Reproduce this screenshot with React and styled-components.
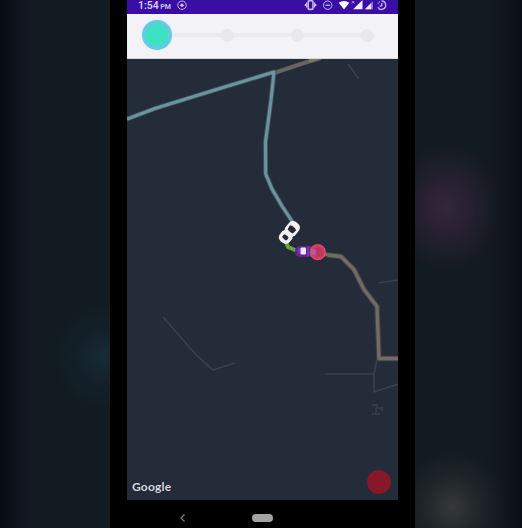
import React from "react";
import styled, { createGlobalStyle } from "styled-components";

const GlobalStyle = createGlobalStyle`
  * { box-sizing: border-box; }
  body { margin: 0; background: #000; overflow: hidden; }
`;

const Stage = styled.main`
  width: 522px;
  height: 528px;
  padding-left: 110px;
  overflow: hidden;
  font-family: Roboto, "Liberation Sans", sans-serif;
  background:
    radial-gradient(ellipse 54px 62px at 446px 207px, #36263b 0%, #32243880 55%, transparent 100%),
    radial-gradient(ellipse 54px 56px at 452px 507px, #353938 0%, #2b303080 52%, transparent 100%),
    radial-gradient(ellipse 50px 52px at 104px 357px, #182b35 0%, #15263080 50%, transparent 100%),
    linear-gradient(90deg, #080b13 0, #0d121a 12px, #121922 30px, #121b22 60px, #131b22 480px, #10161d 505px, #090e16 522px);
`;

const Phone = styled.section`
  display: flex;
  flex-direction: column;
  width: 305px;
  height: 528px;
  padding: 0 17px;
  background: #000;
`;

const StatusBar = styled.header`
  display: flex;
  justify-content: space-between;
  flex: 0 0 14px;
  height: 14px;
  padding-left: 11px;
  background: #390ea4;
  color: #d9cbf4;
`;

const Clock = styled.div`
  display: flex;
  align-items: baseline;
  height: 12px;
  line-height: 11px;
  font-size: 10.5px;
  font-weight: 600;
`;

const Meridiem = styled.span`
  margin-left: 1.5px;
  font-size: 7px;
`;

const AlarmBadge = styled.svg`
  align-self: flex-start;
  width: 10px;
  height: 11px;
  margin-left: 6px;
`;

const StatusIcons = styled.svg`
  width: 96px;
  height: 14px;
`;

const Stepper = styled.nav`
  display: flex;
  align-items: center;
  flex: 0 0 45px;
  height: 45px;
  padding: 0 24px 2px 15px;
  background: #f3f2f6;
  border-bottom: 1px solid #d9d9de;
`;

const Step = styled.span`
  flex: none;
  width: ${({ $active }) => ($active ? 30 : 13)}px;
  height: ${({ $active }) => ($active ? 30 : 13)}px;
  border-radius: 50%;
  background: ${({ $active }) => ($active ? "#3be3c2" : "#e9e8eb")};
  border: ${({ $active }) => ($active ? "4px solid #62cbe2" : "1px solid #e8e7ea")};
  box-shadow: ${({ $active }) => ($active ? "0 0 2px #bce8ee" : "none")};
`;

const Connector = styled.span`
  flex: 1 1 ${({ $first }) => ($first ? 49 : 57)}px;
  height: 4px;
  background: #ecebee;
`;

const MapView = styled.section`
  position: relative;
  flex: 0 0 441px;
  background: #242b39;
`;

const MapDrawing = styled.svg`
  display: block;
  width: 271px;
  height: 441px;
`;

const Attribution = styled.span`
  position: absolute;
  left: 5px;
  bottom: 4px;
  color: #d9dbe0;
  font: 700 12px/18px Lato, sans-serif;
  letter-spacing: .2px;
  text-shadow: 0 0 1px #10151f;
`;

const RecordButton = styled.button`
  position: absolute;
  right: 7px;
  bottom: 6px;
  width: 24px;
  height: 24px;
  padding: 0;
  border: 0;
  border-radius: 50%;
  background: #85192a;
`;

const NavigationBar = styled.footer`
  display: flex;
  align-items: center;
  flex: 0 0 28px;
  padding: 8px 0 0 52px;
`;

const BackIcon = styled.svg`
  width: 8px;
  height: 10px;
`;

const HomePill = styled.span`
  width: 21px;
  height: 8px;
  margin-left: 65px;
  border-radius: 4px;
  background: #a3a3a3;
`;

function SystemIcons() {
  return (
    <StatusIcons viewBox="302 0 96 14" fill="none" stroke="#c8b7ed" strokeWidth="1.3" aria-hidden="true">
      <rect x="308.2" y=".8" width="4.8" height="8.6" rx="1" strokeWidth="1.6" />
      <path d="M306.6 2.5v5M314.6 2.5v5M305.4 4v2M315.8 4v2" />
      <circle cx="327.7" cy="5.2" r="4.2" strokeWidth="1" />
      <path d="M325.5 5.2h4.4" strokeWidth="1.3" />
      <path d="M338.7 2.8Q344 -.9 349.3 2.8L344 9.5Z" fill="#fff" stroke="none" />
      <path d="M362.5 0v9.2h-9.3Z" fill="#f2ecff" stroke="none" />
      <path d="M351.8 1l2.5 2.5M354.3 1l-2.5 2.5" strokeWidth=".8" />
      <path d="M373 1v8.2h-8.2Z" fill="#8770c7" stroke="none" />
      <path d="M371.2 3v6.2H365Z" fill="#eee5ff" stroke="none" />
      <path d="M381.5 1a4.2 4.2 0 1 1-3.7 6.2" />
      <path d="M378 3.7a4.2 4.2 0 0 1 2-2" strokeDasharray="1 1" />
      <path d="M381.8 3.1v2.3l-2 1.2" />
    </StatusIcons>
  );
}

function RouteMap() {
  return (
    <MapDrawing viewBox="127 59 271 441" fill="none" strokeLinejoin="round" aria-label="Route map">
      <g stroke="#39404b" strokeWidth="1.7">
        <path d="M163 317l21 24q10 13 29 29l22-7" />
        <path d="M348 64l11 15M378 283l20-3M325 374h49v18l24-8M377 359l-3 15" />
        <path d="M372 405h5v3h5M382 406v5M372 414h8M376 408v6" strokeWidth="1.3" />
      </g>
      <path d="M274 73l30-10 17-5" stroke="#68645f" strokeWidth="4.2" />
      <path d="M309 61l12-4" stroke="#847d68" strokeWidth="2.6" />
      <path d="M318 252l10 3 13 1.5 13 13 10 20 13 17 2 52h19" stroke="#444445" strokeWidth="5.4" />
      <path d="M318 252l10 3 13 1.5 13 13 10 20 13 17 2 52h19" stroke="#706b64" strokeWidth="3.3" />
      <path d="M127 119l28-10.5 68-21 51-15.5-3 28-5.5 42 .2 32 6.3 15 10 17 10.5 16" stroke="#40555f" strokeWidth="4.9" />
      <path d="M127 119l28-10.5 68-21 51-15.5-3 28-5.5 42 .2 32 6.3 15 10 17 10.5 16" stroke="#6c949e" strokeWidth="3" />
      <path d="M286 242l2 5 8 3.5" stroke="#68a43b" strokeWidth="4" />
      <g transform="translate(289.3 232.5) rotate(39)">
        <rect x="-6.3" y="-12.4" width="12.6" height="24.6" rx="5" fill="#f1f1f1" />
        <path d="M-4-6Q0-8.2 4-6L3.3-1.4Q0-.4-3.3-1.4Z" fill="#242932" />
        <rect x="-2.9" y="4" width="5.8" height="4.4" rx="1.4" fill="#242932" />
        <path d="M-6.3-.4v2.6M6.3-.4v2.6" stroke="#242932" strokeWidth="1.6" />
      </g>
      <rect x="295" y="246" width="20" height="11" rx="5" fill="#642297" />
      <rect x="300.5" y="247.5" width="5.5" height="7" rx="1" fill="#f0e6ff" />
      <path d="M299 248.5v5M308 247v9" stroke="#8950c0" />
      <circle cx="317.8" cy="252.2" r="8" fill="#c73a62" />
      <circle cx="317.8" cy="252.2" r="7.3" stroke="#e64a63" strokeWidth="1.3" />
      <path d="M311 249h4.5v6H311" fill="#b15d9e" />
      <path d="M315 248.5l6 1 1 5-6 2M318 249v6" stroke="#9e3658" strokeWidth=".8" />
    </MapDrawing>
  );
}

export default function App() {
  return (
    <>
      <GlobalStyle />
      <Stage>
        <Phone>
          <StatusBar>
            <Clock>
              1:54<Meridiem>PM</Meridiem>
              <AlarmBadge viewBox="0 0 10 11" fill="none" stroke="#c8b7ed">
                <circle cx="5" cy="5.2" r="4.2" />
                <circle cx="5" cy="5.2" r="1.6" fill="#d9cbf4" stroke="none" />
              </AlarmBadge>
            </Clock>
            <SystemIcons />
          </StatusBar>
          <Stepper aria-label="Trip progress">
            <Step $active />
            <Connector $first />
            <Step />
            <Connector />
            <Step />
            <Connector />
            <Step />
          </Stepper>
          <MapView>
            <RouteMap />
            <Attribution>Google</Attribution>
            <RecordButton aria-label="Record" />
          </MapView>
          <NavigationBar>
            <BackIcon viewBox="0 0 8 10" fill="none" stroke="#7c7c7c" strokeWidth="1.3">
              <path d="M5.5 1.5L2 5l3.5 3.5" />
            </BackIcon>
            <HomePill />
          </NavigationBar>
        </Phone>
      </Stage>
    </>
  );
}
